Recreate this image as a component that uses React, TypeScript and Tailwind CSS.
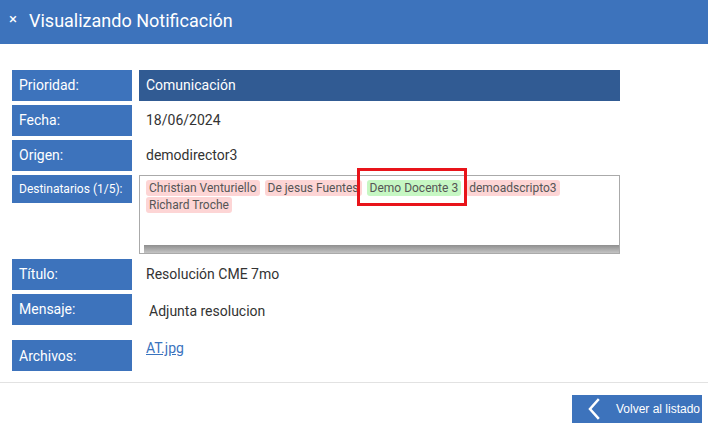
import React from 'react';

type Chip = { name: string; ok?: boolean };

const chips: Chip[] = [
  { name: 'Christian Venturiello' },
  { name: 'De jesus Fuentes' },
  { name: 'Demo Docente 3', ok: true },
  { name: 'demoadscripto3' },
  { name: 'Richard Troche' },
];

const Label: React.FC<{ children: React.ReactNode; className?: string }> = ({ children, className = '' }) => (
  <div className={`w-[120px] shrink-0 bg-[#3d73bc] text-white px-[7px] ${className}`}>{children}</div>
);

const App: React.FC = () => {
  return (
    <div className="w-[708px] h-[431px] bg-white overflow-hidden font-['Roboto',sans-serif]">
      <div className="h-[44px] bg-[#3d73bc] flex items-center pl-[9px] text-white">
        <span className="text-[15px] leading-none mr-[12px] -mt-[6px]">×</span>
        <span className="text-[18px] -mt-[3px]">Visualizando Notificación</span>
      </div>

      <div className="pl-[12px] pt-[26px] text-[14px] text-[#333]">
        <div className="flex gap-[7px] h-[31px]">
          <Label className="flex items-center">Prioridad:</Label>
          <div className="w-[481px] bg-[#315b93] text-white flex items-center px-[7px]">Comunicación</div>
        </div>

        <div className="flex gap-[7px] h-[31px] mt-[4px]">
          <Label className="flex items-center">Fecha:</Label>
          <div className="flex items-center px-[7px]">18/06/2024</div>
        </div>

        <div className="flex gap-[7px] h-[31px] mt-[4px]">
          <Label className="flex items-center">Origen:</Label>
          <div className="flex items-center px-[7px]">demodirector3</div>
        </div>

        <div className="flex gap-[7px] mt-[4px]">
          <Label className="h-[28px] flex items-center text-[12px] self-start">Destinatarios (1/5):</Label>
          <div className="relative w-[481px] h-[79px] border border-[#aaa] flex flex-col">
            <div className="flex flex-wrap content-start gap-x-[5px] gap-y-[1px] px-[6px] pt-[4px] flex-1 text-[12px] text-[#555]">
              {chips.map(c => (
                <span
                  key={c.name}
                  className={`h-[16px] leading-[16px] px-[3px] rounded-[3px] ${c.ok ? 'bg-[#c6f7c3]' : 'bg-[#fdd5d5]'}`}
                >
                  {c.name}
                </span>
              ))}
            </div>
            <div className="h-[8px] ml-[4px] bg-gradient-to-b from-[#8f8f8f] to-[#c4c4c4]" />
            <div className="absolute left-[217px] top-[-8px] w-[110px] h-[38px] border-[3px] border-[#e8141a]" />
          </div>
        </div>

        <div className="flex gap-[7px] h-[31px] mt-[5px]">
          <Label className="flex items-center">Título:</Label>
          <div className="flex items-center px-[7px]">Resolución CME 7mo</div>
        </div>

        <div className="flex gap-[7px] h-[31px] mt-[4px]">
          <Label className="flex items-center">Mensaje:</Label>
          <div className="flex items-center px-[10px] pt-[4px]">Adjunta resolucion</div>
        </div>

        <div className="flex gap-[7px] h-[31px] mt-[15px]">
          <Label className="flex items-center pt-[2px]">Archivos:</Label>
          <a className="px-[7px] -mt-[2px] text-[#3a73be] underline">AT.jpg</a>
        </div>
      </div>

      <div className="mt-[11px] border-t border-[#e2e2e2]" />

      <div className="flex justify-end pr-[6px] pt-[12px]">
        <button className="w-[130px] h-[28px] bg-[#3d73bc] text-white flex items-center font-['Liberation_Sans',sans-serif] text-[12px]">
          <svg width="16" height="22" viewBox="0 0 16 22" className="ml-[14px] mr-[14px]">
            <path d="M12 2 L4 11 L12 20" stroke="white" strokeWidth="2.5" fill="none" strokeLinecap="square" />
          </svg>
          Volver al listado
        </button>
      </div>
    </div>
  );
};

export default App;
